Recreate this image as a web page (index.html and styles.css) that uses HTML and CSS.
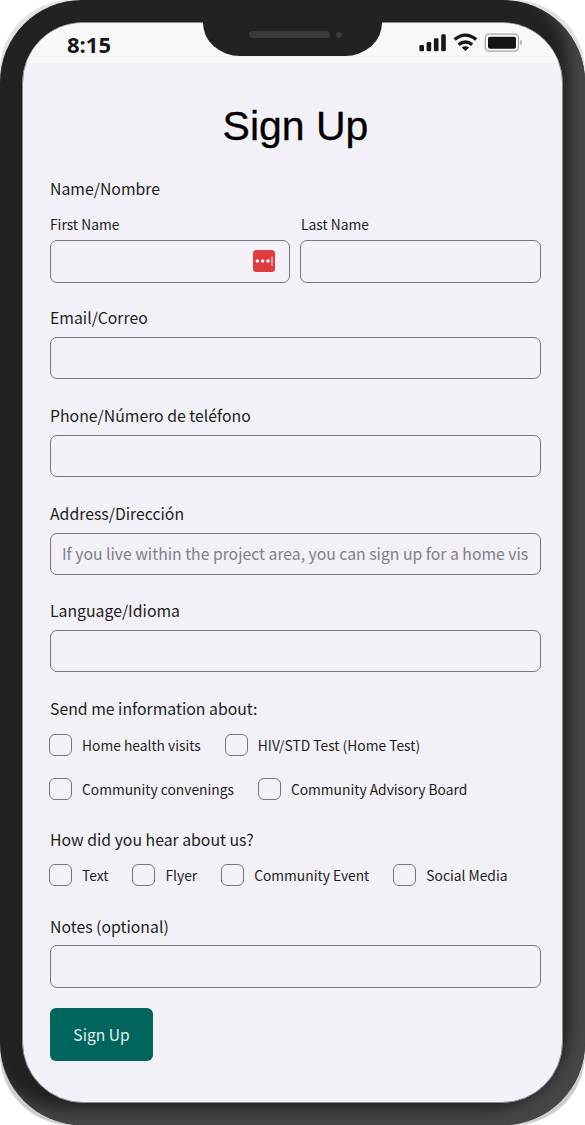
FILE: index.html
```html
<!DOCTYPE html>
<html lang="en">
<head>
<meta charset="utf-8">
<title>Sign Up</title>
<link rel="stylesheet" href="styles.css">
</head>
<body>
<div class="halo">
<div class="phone">
  <div class="screen">
    <header class="status">
      <span class="time">8:15</span>
      <svg class="indicators" width="104" height="20" viewBox="0 0 104 20">
        <g fill="#171717">
          <rect x="0.4" y="12" width="4.6" height="6.2" rx="1.3"/>
          <rect x="7.6" y="9" width="4.6" height="9.2" rx="1.3"/>
          <rect x="14.9" y="5.2" width="4.6" height="13" rx="1.3"/>
          <rect x="22.2" y="1.2" width="4.6" height="17" rx="1.3"/>
          <path d="M46.4 13.2c1.400 0 2.700.4 3.700 1.200l-3.700 3.700-3.700-3.700c1-.8 2.300-1.200 3.700-1.200z"/>
        </g>
        <g fill="none" stroke="#171717" stroke-width="3.3">
          <path d="M39.6 11.600q6.800-5.200 13.600 0"/>
          <path d="M35.6 6.600q10.800-9 21.600 0"/>
        </g>
        <rect x="66.4" y="1.2" width="33" height="17" rx="3.7" fill="#fff" stroke="#a3a3a3" stroke-width="1.3"/>
        <rect x="69" y="3.8" width="28" height="11.9" rx="2" fill="#151515"/>
        <path d="M101.3 6.8c2.2.8 2.2 5 0 5.800z" fill="#a3a3a3"/>
      </svg>
    </header>
    <form class="form">
      <h1 class="title">Sign Up</h1>
      <div class="label name-label">Name/Nombre</div>
      <div class="names">
        <label class="sub"><span class="sublabel">First Name</span>
          <span class="input split"><svg width="22" height="22" viewBox="0 0 22 22"><rect width="22" height="22" rx="3.5" fill="#e03c40"/><g fill="#fff"><circle cx="4.4" cy="11" r="1.7"/><circle cx="9.7" cy="11" r="1.7"/><circle cx="15" cy="11" r="1.7"/><rect x="18.5" y="6.7" width="1" height="9"/></g></svg></span>
        </label>
        <label class="sub"><span class="sublabel last">Last Name</span><span class="input"></span></label>
      </div>
      <label class="field email"><span class="label">Email/Correo</span><input class="input" type="text"></label>
      <label class="field"><span class="label">Phone/Número de teléfono</span><input class="input" type="text"></label>
      <label class="field"><span class="label">Address/Dirección</span><input class="input" type="text" placeholder="If you live within the project area, you can sign up for a home vis"></label>
      <label class="field language"><span class="label">Language/Idioma</span><input class="input" type="text"></label>
      <div class="label info-label">Send me information about:</div>
      <div class="options first">
        <label class="option"><i class="box"></i>Home health visits</label>
        <label class="option"><i class="box"></i>HIV/STD Test (Home Test)</label>
      </div>
      <div class="options second">
        <label class="option"><i class="box"></i>Community convenings</label>
        <label class="option"><i class="box"></i>Community Advisory Board</label>
      </div>
      <div class="label hear-label">How did you hear about us?</div>
      <div class="options hear">
        <label class="option"><i class="box"></i>Text</label>
        <label class="option"><i class="box"></i>Flyer</label>
        <label class="option"><i class="box"></i>Community Event</label>
        <label class="option"><i class="box"></i>Social Media</label>
      </div>
      <label class="field notes"><span class="label">Notes (optional)</span><input class="input" type="text"></label>
      <button class="submit" type="button">Sign Up</button>
    </form>
  </div>
  <div class="notch"><span class="speaker"></span><span class="camera"></span></div>
</div>
</div>
</body>
</html>
```
FILE: styles.css
```css
* { box-sizing: border-box; }
body { margin: 0; background: #fff; overflow: hidden; }
.halo {
  width: 585px; height: 1125px;
  border-radius: 71px;
  background: linear-gradient(#e2e2e2, #cdcdcd);
}
.phone {
  position: relative;
  width: 585px; height: 1125px;
  padding: 22px;
  border-radius: 82px;
  background: #222;
  box-shadow: inset -16px -16px 14px #464646;
}
.screen {
  width: 541px; height: 1081px;
  border: 1px solid #8c8c8e;
  border-radius: 61px;
  overflow: hidden;
  background: #f2f1f7;
  color: #1d1d20;
  font-family: "Noto Sans CJK SC", sans-serif;
}
.status {
  display: flex;
  justify-content: space-between;
  align-items: flex-start;
  height: 40px;
  padding: 10px 39px 0 44px;
  background: #f8f8f8;
}
.time { margin-top: -1px; font: bold 22px/24px "Open Sans", "Noto Sans", sans-serif; color: #171717; }
.indicators { flex: none; }
.notch {
  position: absolute;
  left: 203px; top: 22px;
  width: 179px; height: 33.5px;
  border-radius: 0 0 37px 37px / 0 0 33px 33px;
  background: #222;
  display: flex;
  align-items: flex-start;
  gap: 6px;
  padding: 9px 0 0 46px;
}
.speaker { width: 81px; height: 7px; border-radius: 4px; background: #3a3a3a; }
.camera { width: 6px; height: 6px; border-radius: 50%; background: #3a3a3a; margin-top: .5px; }
.form { padding: 39px 21px 0 27px; }
.title {
  margin: 0;
  text-align: center;
  font: 400 41px/48px "Liberation Sans", sans-serif;
  color: #000;
  -webkit-text-stroke: .3px #000;
}
.label { display: block; height: 24px; font-size: 15.8px; line-height: 24px; white-space: nowrap; }
.name-label { margin-top: 27px; }
.names { display: grid; grid-template-columns: 240px 241px; gap: 10px; margin-top: 13px; }
.sub { display: block; }
.sublabel { display: block; height: 20px; margin-bottom: 6px; font-size: 13.8px; line-height: 20px; }
.last { padding-left: 1px; }
.input {
  display: block;
  width: 100%; height: 42px;
  margin: 7px 0 0;
  padding: 0 11px 1px;
  border: 1.3px solid #77757b;
  border-radius: 7px;
  background: transparent;
  font: 15.75px/24px "Noto Sans CJK SC", sans-serif;
}
.input::placeholder { color: #818087; opacity: 1; }
.sub .input { height: 43px; margin: 0; }
.split { display: flex; align-items: center; justify-content: flex-end; padding: 0 14px 2px; }
.field { display: block; margin-top: 25px; }
.email { margin-top: 23px; }
.language { margin-top: 24px; }
.info-label { margin-top: 25px; }
.options { display: flex; gap: 24px; margin: 12px 0 0 -1px; }
.option { display: flex; align-items: center; gap: 10px; height: 24px; font-size: 13.8px; line-height: 22px; white-space: nowrap; }
.first .option { line-height: 20px; }
.box { flex: none; width: 23px; height: 22px; border: 1px solid #77757b; border-radius: 6px; }
.second { margin-top: 20px; }
.hear-label { margin-top: 27px; }
.hear { margin-top: 11px; }
.notes { margin-top: 28px; }
.notes .input { height: 43px; margin-top: 6px; }
.submit {
  display: block;
  width: 103px; height: 53px;
  margin-top: 20px;
  padding: 0 0 1px;
  border: 0;
  border-radius: 6px;
  background: #00655d;
  color: #e3f0ef;
  font: 15.6px/24px "Noto Sans CJK SC", sans-serif;
}
```
